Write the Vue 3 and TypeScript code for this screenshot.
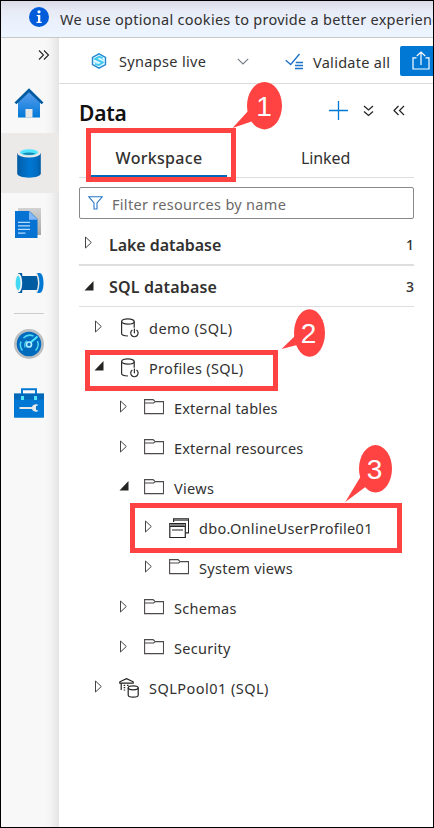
<script setup lang="ts">
interface Row { label: string; level: number; icon: 'db' | 'folder' | 'view' | 'pool'; open?: boolean; cls: string }
const rows: Row[] = [
  { label: 'demo (SQL)', level: 0, icon: 'db', cls: 't-wide' },
  { label: 'Profiles (SQL)', level: 0, icon: 'db', open: true, cls: 't-mid' },
  { label: 'External tables', level: 1, icon: 'folder', cls: 't-narrow' },
  { label: 'External resources', level: 1, icon: 'folder', cls: 't-narrow' },
  { label: 'Views', level: 1, icon: 'folder', open: true, cls: 't-mid' },
  { label: 'dbo.OnlineUserProfile01', level: 2, icon: 'view', cls: 't-mid' },
  { label: 'System views', level: 2, icon: 'folder', cls: 't-mid' },
  { label: 'Schemas', level: 1, icon: 'folder', cls: 't-mid' },
  { label: 'Security', level: 1, icon: 'folder', cls: 't-mid' },
  { label: 'SQLPool01 (SQL)', level: 0, icon: 'pool', cls: 't-wide' },
]
const sections = [
  { label: 'Lake database', count: 1, open: false },
  { label: 'SQL database', count: 3, open: true },
]
</script>

<template>
  <div class="app">
    <div class="banner">
      <svg class="info" width="20" height="20" viewBox="0 0 20 20"><circle cx="10" cy="10" r="10" fill="#015cda" /><circle cx="10" cy="4.8" r="1.6" fill="#fff" /><path d="M7.7 8h3.6v6.7h1.4V16H7.5v-1.3H9V9.3H7.7z" fill="#fff" /></svg>
      <span class="banner-text">We use optional cookies to provide a better experience</span>
    </div>
    <div class="body">
      <nav class="rail">
        <div class="expand"><svg width="12" height="12" viewBox="0 0 12 12" fill="none" stroke="#222" stroke-width="1.1"><path d="M1 1.5l4.500 4.500L1 10.500M6 1.500l4.500 4.500L6 10.500" /></svg></div>
        <div class="nav">
          <svg width="30" height="30" viewBox="0 0 30 30">
            <defs><linearGradient id="hg" x1="0" y1="0" x2="0" y2="1"><stop offset="0" stop-color="#5ea0ef" /><stop offset="1" stop-color="#0078d7" /></linearGradient></defs>
            <path d="M4 14L15 3l11 11v15q0 .6-.6.6H4.600Q4 29.600 4 29z" fill="url(#hg)" /><path d="M11.500 21h7v8.600h-7z" fill="#e6e6e6" />
            <path d="M.5 14.600L15 .2l14.500 14.400-1.900 1.700L15 4.200 2.400 16.300z" fill="#005ba1" />
          </svg>
        </div>
        <div class="nav active">
          <svg width="24" height="30" viewBox="0 0 24 30">
            <defs><linearGradient id="cg"><stop offset="0" stop-color="#005ba1" /><stop offset=".2" stop-color="#0068b9" /><stop offset=".55" stop-color="#0078d4" /><stop offset=".85" stop-color="#006bc0" /><stop offset="1" stop-color="#005ba1" /></linearGradient></defs>
            <path d="M.2 5v20.500c0 2.300 5.300 4.200 11.800 4.200s11.800-1.900 11.800-4.200V5z" fill="url(#cg)" /><ellipse cx="12" cy="5" rx="11.800" ry="4.500" fill="#e8e8e8" /><ellipse cx="12" cy="4.300" rx="9" ry="3" fill="#50e6ff" /><path d="M5 5.700q7-2.600 14 0-7 2.800-14 0" fill="#198ab3" />
          </svg>
        </div>
        <div class="nav docs">
          <svg width="28" height="32" viewBox="0 0 28 32">
            <defs><linearGradient id="gg" x1="0" y1="0" x2="0" y2="1"><stop offset="0" stop-color="#d2d2d2" /><stop offset="1" stop-color="#a7a7a7" /></linearGradient></defs>
            <path d="M4 1h23v27H4z" fill="url(#gg)" /><path d="M1 4h14.500l8 8V31H1z" fill="#0672d2" /><path d="M15 4l8.800 8.800H15z" fill="#83b9f9" /><path d="M4 15.300h12M4 18.800h12M4 22.300h12M4 26.200h7.500" stroke="#b6dcff" stroke-width="1.300" />
          </svg>
        </div>
        <div class="nav">
          <svg width="30" height="20" viewBox="0 0 30 20">
            <path d="M6 3h18v14H6z" fill="#005ba1" /><path d="M22.500 0h3c2 0 4 3 4 10s-2 10-4 10h-3q3.500-10 0-20" fill="#0078d4" /><path d="M22.500.3q4.500 9.700 0 19.400" fill="none" stroke="#e6e6e6" stroke-width="1.500" />
            <path d="M4 0h4q2 10 0 20H4z" fill="#005ba1" /><ellipse cx="4.500" cy="10" rx="3.700" ry="9.500" fill="#edf3f6" /><ellipse cx="4.100" cy="10" rx="2.400" ry="7.200" fill="#43d9f3" />
          </svg>
        </div>
        <div class="rail-line"></div>
        <div class="nav gauge">
          <svg width="30" height="30" viewBox="0 0 30 30">
            <circle cx="15" cy="15" r="15" fill="#bcbfc1" /><circle cx="15" cy="15" r="12.300" fill="#006abd" />
            <path d="M8.500 21.500A9 9 0 017 12.500M9.500 9a9 9 0 0110-2M23.500 12a9 9 0 01-2 9.500" fill="none" stroke="#50d8f4" stroke-width="1.500" /><path d="M11 18.500q-1-5 2-6.800" fill="none" stroke="#50d8f4" stroke-width="1.200" /><path d="M16 14L23.500 7.500" stroke="#50e6ff" stroke-width="2" /><circle cx="15" cy="15.500" r="2.500" fill="#0870c3" stroke="#aeefff" stroke-width="1.700" />
          </svg>
        </div>
        <div class="nav manage">
          <svg width="30" height="30" viewBox="0 0 30 30">
            <path d="M8 7V1.200h14V7" fill="none" stroke="#0078d4" stroke-width="2" /><path d="M0 5.500h30V29q0 .8-.8.800H.8Q0 29.800 0 29z" fill="#0078d4" /><path d="M0 5.500h30v6H0z" fill="#005ba1" opacity=".55" />
            <path d="M7 8h3v4H7zM20 8h3v4h-3z" fill="#50e6ff" /><path d="M5.500 19H18q1-2.800 4-2.800 1.500 0 2.500.8L22 18.300v3.400l2.500 1q-1 1.100-2.500 1.100-3 0-4-2.800H5.500z" fill="#e9e9e9" />
          </svg>
        </div>
      </nav>
      <main class="main">
        <div class="toolbar">
          <svg class="syn" width="16" height="16" viewBox="0 0 16 16"><path d="M8 .8l6.500 3.700v7L8 15.200 1.500 11.500v-7z" fill="#eafaff" stroke="#2387d3" stroke-width="1.400" /><path d="M11.800 5L8 3.800 4.200 5.900 11.800 9.500 8 12 4 11" fill="none" stroke="#43c9ee" stroke-width="2" /><path d="M2 8.500l4.500 2M14 7.500l-4.500-2" stroke="#9fe8f8" stroke-width="1" /></svg>
          <span class="synapse">Synapse live</span>
          <svg class="chev" width="12" height="7" viewBox="0 0 12 7"><path d="M.8.8L6 6 11.200.8" fill="none" stroke="#717b85" stroke-width="1.100" /></svg>
          <svg class="valid" width="19" height="17" viewBox="0 0 19 17"><path d="M.7 7.200l5 4.300L14.500 1" fill="none" stroke="#1a72c9" stroke-width="1.300" /><path d="M10.800 9.500H18M10 12.500h8M10 15.500h8" stroke="#1a72c9" stroke-width="1.300" /></svg>
          <span class="validate">Validate all</span>
          <span class="publish"><svg width="18" height="19" viewBox="0 0 18 19" fill="none" stroke="#fff" stroke-width="1.200"><path d="M4.500 6.800H1v11.200h16V6.800h-3.500M9 14V1M4.800 5L9 1l4.200 4" /></svg></span>
        </div>
        <div class="panel">
          <header class="heading">
            <h1>Data</h1>
            <svg class="plus" width="19" height="19" viewBox="0 0 19 19"><path d="M9.500 0v19M0 9.500h19" stroke="#0078d4" stroke-width="1.300" /></svg>
            <svg class="down" width="11" height="12" viewBox="0 0 11 12"><path d="M1 1l4.500 4L10 1M1 6.500l4.500 4 4.500-4" fill="none" stroke="#222" stroke-width="1.200" /></svg>
            <svg class="left" width="12" height="11" viewBox="0 0 12 11"><path d="M5.500 1L1 5.500 5.500 10M11 1L6.500 5.500 11 10" fill="none" stroke="#222" stroke-width="1.200" /></svg>
          </header>
          <div class="tabs"><div class="tab selected"><span>Workspace</span></div><div class="tab linked"><span>Linked</span></div></div>
          <div class="filter">
            <svg width="15" height="14" viewBox="0 0 15 14"><path d="M.8.8h13.400L9 7v6H6V7z" fill="none" stroke="#2878c8" stroke-width="1.100" /></svg>
            <span>Filter resources by name</span>
          </div>
          <div v-for="s in sections" :key="s.label" class="section" :class="{ open: s.open }">
            <svg class="arrow" width="10" height="13" viewBox="0 0 10 13"><path v-if="s.open" d="M9.500 1v9.500H.5z" fill="#252423" /><path v-else d="M1.500 1v11L7.300 6.500z" fill="none" stroke="#444" stroke-width="1" /></svg>
            <strong>{{ s.label }}</strong><span class="count">{{ s.count }}</span>
          </div>
          <div class="tree">
            <div v-for="r in rows" :key="r.label" class="row" :class="'level' + r.level">
              <svg class="arrow" width="10" height="13" viewBox="0 0 10 13"><path v-if="r.open" d="M9.500 1v9.500H.5z" fill="#252423" /><path v-else d="M1.500 1v11L7.300 6.500z" fill="none" stroke="#444" stroke-width="1" /></svg>
              <svg v-if="r.icon === 'folder'" class="icon" width="20" height="20" viewBox="0 0 20 20" fill="none" stroke="#4d4a49" stroke-width="1.100"><path d="M.6 1.600h8.500l2 2H19.500v12H.6zM.6 5h9l1.500-1.400" /></svg>
              <svg v-else-if="r.icon === 'db'" class="icon" width="20" height="20" viewBox="0 0 20 20" fill="none" stroke="#302e2d" stroke-width="1.200"><ellipse cx="8.900" cy="3.500" rx="6.300" ry="2.600" /><path d="M2.600 3.500v12c0 1.300 2.500 2.300 6.400 2.500M15.200 3.500v6.300M13.300 12a3.700 3.700 0 104.200 0M15.400 10.500v4.700" /></svg>
              <svg v-else-if="r.icon === 'view'" class="icon" width="20" height="20" viewBox="0 0 20 20" fill="none" stroke="#252423" stroke-width="1.200"><path d="M4.600 4V.8h15v14H17" /><path d="M5 2h14" stroke="#777" stroke-width="2" /><path d="M.8 5.500h15.500v14H.8z" fill="#fff" /><path d="M1.400 7.100h14.200" stroke="#777" stroke-width="2" /><path d="M.8 8.500h15.500M3 12h11" /></svg>
              <svg v-else class="icon" width="20" height="20" viewBox="0 0 20 20" fill="none" stroke="#252423" stroke-width="1.200"><path d="M.8 5.200V3.800L7.500.6l6.700 3.200v1.400zM2.200 5.200V12M4.700 7.300h1.500M8 7.300h1.500M4.700 9.700h1.500M4.700 12h1.500" /><ellipse cx="14.200" cy="9.800" rx="5" ry="2" fill="#fff" /><path d="M9.200 9.800v7.200c0 1.200 2.100 2.200 5 2.200s5-1 5-2.200V9.800" /></svg>
              <span :class="r.cls">{{ r.label }}</span>
            </div>
          </div>
        </div>
      </main>
    </div>
    <div class="mark m1"></div><div class="mark m2"></div><div class="mark m3"></div>
    <svg class="callouts" width="434" height="828" viewBox="0 0 434 828">
      <g fill="#ff4343"><path d="M232.500 128L249 110l7 10z" /><ellipse cx="264.500" cy="105.700" rx="17.500" ry="23.700" /><path d="M281.500 349L296 335l3 9.500z" /><ellipse cx="309.500" cy="333" rx="15.500" ry="23.700" /><path d="M345.300 502L361 476l7 9z" /><ellipse cx="375.500" cy="468.800" rx="16.500" ry="23.700" /></g>
      <g class="numbers"><text x="264" y="115.500">1</text><text x="308.500" y="343">2</text><text x="374.500" y="479">3</text></g>
    </svg>
  </div>
</template>

<style>
body { margin: 0; overflow: hidden; }
</style>
<style scoped>
.app { position: relative; box-sizing: border-box; width: 434px; height: 828px; border: 1px solid #000; background: #fff; overflow: hidden; font-family: "Noto Sans", sans-serif; font-size: 14.500px; color: #323130; display: flex; flex-direction: column; white-space: nowrap; }
svg { flex: none; display: block; }
.banner { height: 36px; flex: none; border-bottom: 1px solid #c6c8ca; background: linear-gradient(#d9dae5 0, #e7eaf5 9px, #eaf1fd 22px, #edf5ff); display: flex; align-items: center; padding-left: 28px; }
.info { margin-top: -4px; }
.banner-text { margin-left: 11px; margin-top: -1px; letter-spacing: .28px; }
.body { display: flex; flex: 1; min-height: 0; }
.rail { width: 58px; flex: none; background: linear-gradient(90deg, #f8f8f8 0 44px, #f3f3f3 50px, #e4e4e4 58px); }
.expand { height: 35px; padding-left: 37px; display: flex; align-items: center; }
.expand svg { margin-top: -2px; }
.nav { height: 60px; width: 56px; display: flex; align-items: center; justify-content: center; }
.nav.active { background: #ebeae9; width: 58px; padding-right: 2px; box-sizing: border-box; }
.docs svg { margin: -1px 2px 0 0; }
.rail-line { width: 30px; height: 1px; background: #ccc; margin-left: 13px; }
.gauge { height: 59px; }
.main { flex: 1; min-width: 0; }
.toolbar { height: 45px; border-bottom: 1px solid #dcdcdc; display: flex; align-items: center; padding-left: 32px; }
.toolbar span { flex: none; }
.synapse { margin-left: 12px; width: 118px; letter-spacing: .33px; }
.chev { margin-top: 2px; }
.valid { margin-left: 36px; margin-top: 2px; }
.validate { margin-left: 9px; width: 87px; margin-top: 2px; letter-spacing: .28px; }
.publish { width: 40px; height: 30px; background: #0078d4; border-radius: 2px; display: flex; align-items: center; padding-left: 12px; box-sizing: border-box; }
.panel { margin-left: 20px; width: 335px; }
.heading { height: 56px; display: flex; align-items: center; }
.heading svg { margin-top: -3px; }
h1 { margin: 2px 0 0; width: 250px; flex: none; font-size: 21px; line-height: 28px; font-weight: 600; color: #111; letter-spacing: -.2px; }
.down { margin-left: 15px; }
.left { margin-left: 19px; }
.tabs { height: 37px; border-bottom: 1px solid #dedede; display: flex; }
.tab { height: 37px; display: flex; padding-top: 7px; box-sizing: border-box; font-size: 16px; line-height: 22px; }
.selected { width: 136px; margin-left: 12px; justify-content: center; border-bottom: 2px solid #0067b8; font-weight: 500; letter-spacing: .3px; }
.linked { margin-left: 74px; letter-spacing: -.1px; }
.filter { margin-top: 9px; height: 32px; box-sizing: border-box; border: 1px solid #8a8886; border-radius: 2px; display: flex; align-items: center; padding-left: 8px; color: #6c6a68; letter-spacing: .3px; }
.filter span { margin-left: 9px; margin-top: 1px; }
.section { height: 45px; border-bottom: 2px solid #dedede; display: flex; align-items: center; padding-left: 5px; }
.section .arrow { margin-top: 2px; }
.section strong { margin-left: 15px; margin-top: 7px; font-size: 16px; font-weight: 600; letter-spacing: -.05px; }
.count { margin-left: auto; margin-top: 6px; font-size: 14px; font-weight: 500; }
.section.open { height: 40px; border-bottom-width: 1px; }
.section.open .arrow { margin-top: 0; }
.section.open strong { margin-top: 2px; letter-spacing: .15px; }
.section.open .count { margin-top: 1px; }
.tree { padding-top: 1px; }
.row { height: 40px; display: flex; align-items: center; padding-left: 15px; }
.level1 { padding-left: 40px; }
.level2 { padding-left: 65px; }
.arrow { margin-top: -3px; }
.icon { margin-left: 15px; }
.row span { margin-left: 10px; }
.t-wide { letter-spacing: .47px; }
.t-mid { letter-spacing: .3px; }
.t-narrow { letter-spacing: .19px; }
.mark { position: absolute; box-sizing: border-box; border: 5px solid #ff4343; }
.m1 { left: 85px; top: 127px; width: 150px; height: 54px; }
.m2 { left: 84px; top: 349px; width: 193px; height: 41px; }
.m3 { left: 129px; top: 502px; width: 272px; height: 50px; }
.callouts { position: absolute; left: -1px; top: -1px; }
.numbers { fill: #fff; font: 28px "Liberation Sans", Arial, sans-serif; text-anchor: middle; }
</style>
